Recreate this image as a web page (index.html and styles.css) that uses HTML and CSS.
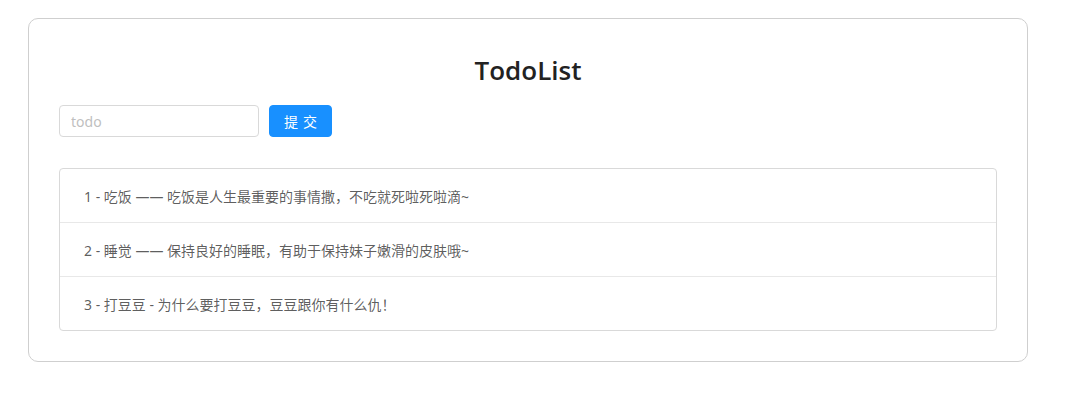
FILE: index.html
```html
<!DOCTYPE html>
<html lang="zh">
<head>
<meta charset="utf-8">
<title>TodoList</title>
<link rel="stylesheet" href="styles.css">
</head>
<body>
<div class="card">
  <h2 class="title">TodoList</h2>
  <div class="form">
    <input class="input" type="text" placeholder="todo">
    <button class="btn" type="button">提 交</button>
  </div>
  <ul class="list">
    <li class="item">1 - 吃饭 —— 吃饭是人生最重要的事情撒，不吃就死啦死啦滴~</li>
    <li class="item">2 - 睡觉 —— 保持良好的睡眠，有助于保持妹子嫩滑的皮肤哦~</li>
    <li class="item">3 - 打豆豆 - 为什么要打豆豆，豆豆跟你有什么仇！</li>
  </ul>
</div>
</body>
</html>
```
FILE: styles.css
```css
html, body {
  margin: 0;
  padding: 0;
  background: #fff;
}
body {
  padding: 18px 0 0 28px;
  font-family: "Noto Sans", "Noto Sans CJK SC", sans-serif;
  font-size: 14px;
  color: rgba(0, 0, 0, 0.65);
}
.card {
  width: 1000px;
  border: 1px solid #cfcfcf;
  border-radius: 10px;
  padding: 30px;
  box-sizing: border-box;
}
.title {
  margin: 0 0 14px;
  text-align: center;
  font-family: "Open Sans", sans-serif;
  font-weight: 600;
  font-size: 26px;
  line-height: 42px;
  color: #222;
}
.form {
  display: flex;
  align-items: center;
  gap: 10px;
}
.input {
  width: 200px;
  height: 32px;
  box-sizing: border-box;
  border: 1px solid #d9d9d9;
  border-radius: 4px;
  padding: 4px 11px;
  font-family: "Noto Sans", "Noto Sans CJK SC", sans-serif;
  font-size: 14px;
  color: rgba(0, 0, 0, 0.65);
  outline: none;
}
.input::placeholder {
  color: #bfbfbf;
}
.btn {
  height: 32px;
  width: 63px;
  box-sizing: border-box;
  border: 1px solid #1890ff;
  background: #1890ff;
  color: #fff;
  border-radius: 4px;
  font-family: "Noto Sans CJK SC", sans-serif;
  font-size: 14px;
  letter-spacing: 1px;
  padding: 0 0 0 1px;
}
.list {
  list-style: none;
  margin: 31px 0 0;
  padding: 0;
  border: 1px solid #d9d9d9;
  border-radius: 4px;
}
.item {
  height: 53px;
  display: flex;
  align-items: center;
  padding: 0 24px;
  border-bottom: 1px solid #e8e8e8;
}
.item:last-child {
  border-bottom: none;
}
```
